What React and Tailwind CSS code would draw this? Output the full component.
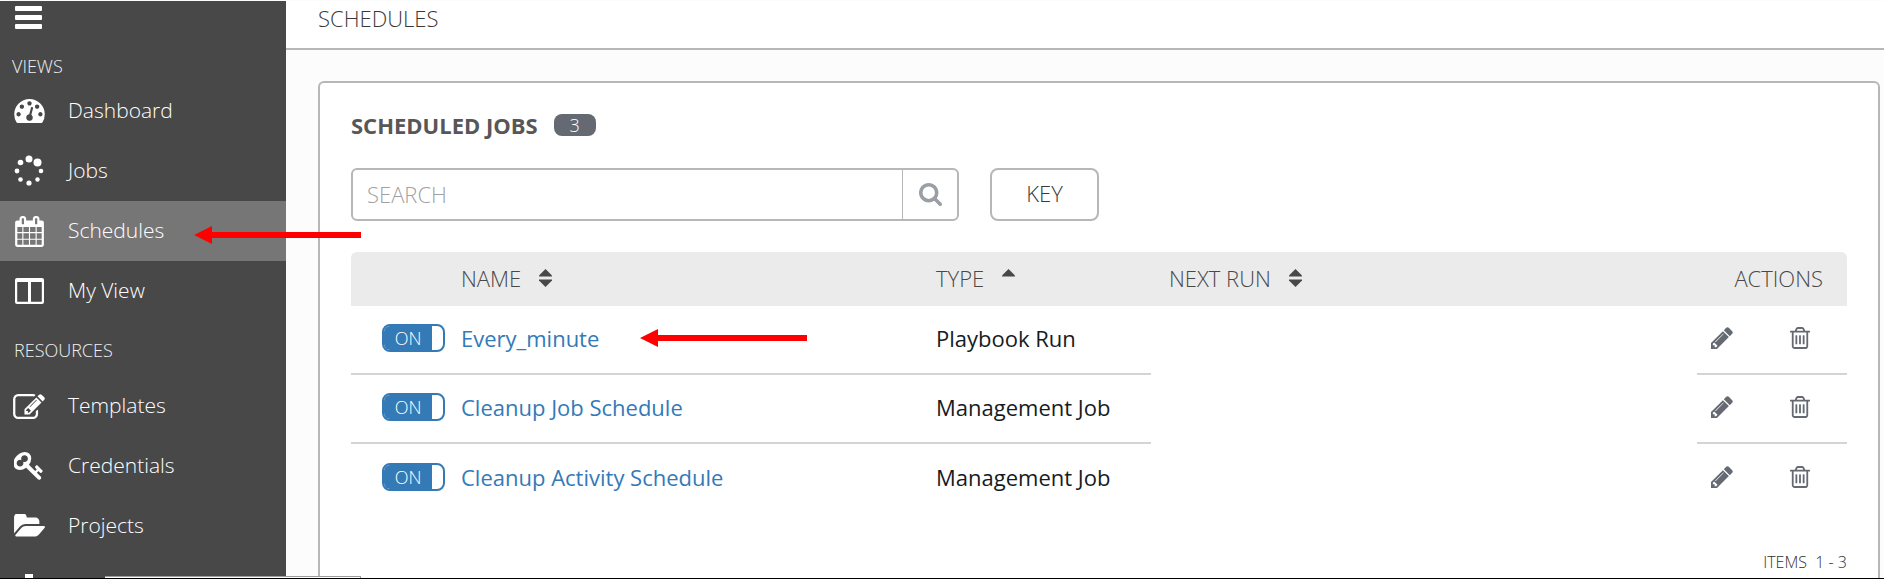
const TACH = "M384 1152q0-53-37.5-90.5t-90.5-37.5-90.5 37.5-37.5 90.5 37.5 90.5 90.5 37.5 90.5-37.5 37.5-90.5zm192-448q0-53-37.5-90.5t-90.5-37.5-90.5 37.5-37.5 90.5 37.5 90.5 90.5 37.5 90.5-37.5 37.5-90.5zm428 481l101-382q6-26-7.5-48.5t-38.5-29.5-48 6.5-30 39.5l-101 382q-60 5-107 43.5t-63 98.5q-20 77 20 146t117 89 146-20 89-117q16-60-6-117t-72-91zm660-33q0-53-37.5-90.5t-90.5-37.5-90.5 37.5-37.5 90.5 37.5 90.5 90.5 37.5 90.5-37.5 37.5-90.5zm-640-640q0-53-37.5-90.5t-90.5-37.5-90.5 37.5-37.5 90.5 37.5 90.5 90.5 37.5 90.5-37.5 37.5-90.5zm448 192q0-53-37.5-90.5t-90.5-37.5-90.5 37.5-37.5 90.5 37.5 90.5 90.5 37.5 90.5-37.5 37.5-90.5zm320 448q0 261-141 483-19 29-54 29h-1402q-35 0-54-29-141-221-141-483 0-182 71-348t191-286 286-191 348-71 348 71 286 191 191 286 71 348z";
const CALENDAR = "M192 1664h288v-288h-288v288zm352 0h320v-288h-320v288zm-352-352h288v-320h-288v320zm352 0h320v-320h-320v320zm-352-384h288v-288h-288v288zm736 736h320v-288h-320v288zm-384-736h320v-288h-320v288zm768 736h288v-288h-288v288zm-384-352h320v-320h-320v320zm-352-864v-288q0-13-9.5-22.5t-22.5-9.5h-64q-13 0-22.5 9.5t-9.5 22.5v288q0 13 9.5 22.5t22.5 9.5h64q13 0 22.5-9.5t9.5-22.5zm736 864h288v-320h-288v320zm-384-384h320v-288h-320v288zm384 0h288v-288h-288v288zm32-480v-288q0-13-9.5-22.5t-22.5-9.5h-64q-13 0-22.5 9.5t-9.5 22.5v288q0 13 9.5 22.5t22.5 9.5h64q13 0 22.5-9.5t9.5-22.5zm384-64v1280q0 52-38 90t-90 38h-1408q-52 0-90-38t-38-90v-1280q0-52 38-90t90-38h128v-96q0-66 47-113t113-47h64q66 0 113 47t47 113v96h384v-96q0-66 47-113t113-47h64q66 0 113 47t47 113v96h128q52 0 90 38t38 90z";
const EDIT = "M888 1184l116-116-152-152-116 116v56h96v96h56zm440-720q-16-16-33 1l-350 350q-17 17-1 33t33-1l350-350q17-17 1-33zm80 594v190q0 119-84.5 203.5t-203.5 84.5h-832q-119 0-203.5-84.5t-84.5-203.5v-832q0-119 84.5-203.5t203.5-84.5h832q63 0 117 25 15 7 18 23 3 17-9 29l-49 49q-14 14-32 8-23-6-45-6h-832q-66 0-113 47t-47 113v832q0 66 47 113t113 47h832q66 0 113-47t47-113v-126q0-13 9-22l64-64q15-15 35-7t20 29zm-96-738l288 288-672 672h-288v-288zm444 132l-92 92-288-288 92-92q28-28 68-28t68 28l152 152q28 28 28 68t-28 68z";
const KEY = "M832 512q0-80-56-136t-136-56-136 56-56 136q0 42 19 83-41-19-83-19-80 0-136 56t-56 136 56 136 136 56 136-56 56-136q0-42-19-83 41 19 83 19 80 0 136-56t56-136zm851 704q0 17-49 66t-66 49q-9 0-28.5-16t-36.5-33-38.5-40-24.5-26l-96 96 220 220q28 28 28 68 0 42-39 81t-81 39q-40 0-68-28l-671-671q-176 131-365 131-163 0-265.5-102.5t-102.5-265.5q0-160 95-313t248-248 313-95q163 0 265.5 102.5t102.5 265.5q0 189-131 365l355 355 96-96q-3-3-26-24.5t-40-38.5-33-36.5-16-28.5q0-17 49-66t66-49q13 0 23 10 6 6 46 44.5t82 79.5 86.5 86 73 78 28.5 41z";
const FOLDER = "M1943 952q0 31-31 66l-336 396q-43 51-120.5 86.5t-143.5 35.5h-1088q-34 0-60.5-13t-26.5-43q0-31 31-66l336-396q43-51 120.5-86.5t143.5-35.5h1088q34 0 60.5 13t26.5 43zm-343-344v160h-832q-94 0-197 47.5t-164 119.5l-337 396-5 6q0-4-.5-12.5t-.5-12.5v-960q0-92 66-158t158-66h320q92 0 158 66t66 158v32h544q92 0 158 66t66 158z";
const SEARCH = "M1216 832q0-185-131.5-316.5t-316.5-131.5-316.5 131.5-131.5 316.5 131.5 316.5 316.5 131.5 316.5-131.5 131.5-316.5zm512 832q0 52-38 90t-90 38q-54 0-90-38l-343-342q-179 124-399 124-143 0-273.5-55.5t-225-150-150-225-55.5-273.5 55.5-273.5 150-225 225-150 273.5-55.5 273.5 55.5 225 150 150 225 55.5 273.5q0 220-124 399l343 343q37 37 37 90z";
const PENCIL = "M491 1536l91-91-235-235-91 91v107h128v128h107zm523-928q0-22-22-22-10 0-17 7l-542 542q-7 7-7 17 0 22 22 22 10 0 17-7l542-542q7-7 7-17zm-54-192l416 416-832 832h-416v-416zm683 96q0 53-37 90l-166 166-416-416 166-165q36-38 90-38 53 0 91 38l235 234q37 39 37 91z";
const TRASH = "M704 736v576q0 14-9 23t-23 9h-64q-14 0-23-9t-9-23v-576q0-14 9-23t23-9h64q14 0 23 9t9 23zm256 0v576q0 14-9 23t-23 9h-64q-14 0-23-9t-9-23v-576q0-14 9-23t23-9h64q14 0 23 9t9 23zm256 0v576q0 14-9 23t-23 9h-64q-14 0-23-9t-9-23v-576q0-14 9-23t23-9h64q14 0 23 9t9 23zm128 724v-948h-896v948q0 22 7 40.5t14.5 27 10.5 8.5h832q3 0 10.5-8.5t14.5-27 7-40.5zm-672-1076h448l-48-117q-7-9-17-11h-317q-10 2-17 11zm928 32v64q0 14-9 23t-23 9h-96v948q0 83-47 143.5t-113 60.5h-832q-66 0-113-58.5t-47-141.5v-952h-96q-14 0-23-9t-9-23v-64q0-14 9-23t23-9h309l70-167q15-37 54-63t79-26h320q40 0 79 26t54 63l70 167h309q14 0 23 9t9 23z";

function Glyph({ d, box = "0 0 1792 1792", className }) {
  return (
    <svg viewBox={box} className={className} fill="currentColor" aria-hidden="true">
      <path d={d} />
    </svg>
  );
}

function Spinner() {
  return (
    <svg viewBox="0 0 32 32" className="size-8" fill="currentColor" aria-hidden="true">
      <circle cx="16" cy="4" r="3.500" />
      <circle cx="24.500" cy="7.500" r="4" />
      <circle cx="28" cy="16" r="2.300" />
      <circle cx="24.500" cy="24.500" r="2.200" />
      <circle cx="16" cy="28" r="2.600" />
      <circle cx="7.500" cy="24.500" r="2.300" />
      <circle cx="4" cy="16" r="2.400" />
      <circle cx="7.500" cy="7.500" r="2.800" />
    </svg>
  );
}

function Columns() {
  return (
    <svg viewBox="0 0 29 26" className="h-[26px] w-[29px]" fill="currentColor" aria-hidden="true">
      <path fillRule="evenodd" d="M2 0h25a2 2 0 0 1 2 2v22a2 2 0 0 1-2 2H2a2 2 0 0 1-2-2V2a2 2 0 0 1 2-2zM2.200 4v19.800h10.800V4zM16 4v19.800h10.800V4z" />
    </svg>
  );
}

const views = [
  { label: "Dashboard", icon: <Glyph d={TACH} box="0 256 1792 1408" className="h-6 w-[31px]" /> },
  { label: "Jobs", icon: <Spinner /> },
  { label: "Schedules", active: true, icon: <Glyph d={CALENDAR} box="64 0 1664 1792" className="h-[31px] w-[29px]" /> },
  { label: "My View", icon: <Columns /> },
];
const resources = [
  { label: "Templates", icon: <Glyph d={EDIT} box="0 128 1792 1408" className="h-[25px] w-8" /> },
  { label: "Credentials", icon: <Glyph d={KEY} box="64 128 1664 1600" className="h-7 w-[30px]" /> },
  { label: "Projects", icon: <Glyph d={FOLDER} box="0 256 1943 1280" className="h-6 w-8" /> },
  {
    name: "Inventories",
    icon: (
      <svg viewBox="0 0 30 26" className="h-[26px] w-[30px]" fill="currentColor" aria-hidden="true">
        <path d="M11 1h8v8h-2v5h10v6h3v6h-9v-6h3v-3H6v3h3v6H0v-6h3v-6h10V9h-2z" />
      </svg>
    ),
  },
];

function NavList({ items }) {
  return (
    <ul>
      {items.map((it) => (
        <li key={it.label || it.name}>
          <a
            href="#"
            aria-label={it.name}
            aria-current={it.active ? "page" : undefined}
            className={`flex h-15 items-center gap-[23px] pl-[13px] text-[21px] text-white ${it.active ? "bg-[#767676]" : ""}`}
          >
            <span className="flex w-8 shrink-0 items-center justify-center">{it.icon}</span>
            {it.label}
          </a>
        </li>
      ))}
    </ul>
  );
}

function Sort({ up }) {
  return (
    <svg viewBox="0 0 13 18" className="h-[18px] w-[13px]" fill="currentColor" aria-hidden="true">
      <path d="M6.500 0L13 6.500V7.500H0V6.500z" />
      {!up && <path d="M6.500 18L13 11.500V10.500H0V11.500z" />}
    </svg>
  );
}

function SortHead({ children, up, className }) {
  return (
    <th className={className} aria-sort={up ? "ascending" : "none"}>
      <button type="button" className="flex items-center gap-[18px]">
        {children}
        <Sort up={up} />
      </button>
    </th>
  );
}

function Arrow({ className }) {
  return (
    <svg viewBox="0 0 167 18" className={`absolute h-[18px] w-[167px] ${className}`} fill="#ff0000" aria-hidden="true">
      <path d="M0 9L18 0v6h149v6H18v6z" />
    </svg>
  );
}

const rows = [
  ["Every_minute", "Playbook Run"],
  ["Cleanup Job Schedule", "Management Job"],
  ["Cleanup Activity Schedule", "Management Job"],
];

export default function App() {
  return (
    <div className="flex h-screen overflow-hidden border-b border-black bg-[#fcfcfc] pt-px font-['Open_Sans',sans-serif] font-light text-[#161b1f]">
      <nav aria-label="Main" className="w-[286px] shrink-0 bg-[#484848] text-white">
        <button type="button" aria-label="Toggle menu" className="ml-[15px] mt-[5px] flex h-[23px] w-[27px] flex-col justify-between">
          <span className="h-[5px] w-full rounded-[1px] bg-white" />
          <span className="h-[5px] w-full rounded-[1px] bg-white" />
          <span className="h-[5px] w-full rounded-[1px] bg-white" />
        </button>
        <h2 className="mt-[25px] pl-3 text-lg leading-6 text-[#f0f0f0]">VIEWS</h2>
        <div className="mt-[3px]"><NavList items={views} /></div>
        <h2 className="mt-[17px] pl-3.5 text-lg leading-6 text-[#f0f0f0]">RESOURCES</h2>
        <div className="mt-3.5"><NavList items={resources} /></div>
      </nav>
      <div className="flex min-w-0 flex-1 flex-col">
        <header className="flex h-[49px] shrink-0 items-center border-b-2 border-[#b7b7b7] bg-white pb-3 pl-8">
          <h1 className="text-[22px] text-[#383838]">SCHEDULES</h1>
        </header>
        <main className="mt-[31px] ml-8 mr-1 flex-1 rounded-t-md border-2 border-b-0 border-[#b7b7b7] bg-white px-[31px]">
          <div className="flex items-center gap-4 pt-[26px]">
            <h2 className="text-[22px] leading-8 font-bold text-[#575757]">SCHEDULED JOBS</h2>
            <span className="flex h-[22px] w-[42px] items-center justify-center rounded-lg bg-[#646972] text-lg text-white">3</span>
          </div>
          <div className="mt-[27px] flex gap-[31px]">
            <form role="search" className="flex h-[53px] w-[608px] overflow-hidden rounded-md border-2 border-[#b7b7b7]">
              <input aria-label="Search" placeholder="SEARCH" className="min-w-0 flex-1 px-3.5 text-[22px] outline-none placeholder:text-[#a0a0a0]" />
              <button type="button" aria-label="Search" className="flex w-[55px] items-center justify-center border-l border-[#b7b7b7] text-[#9a9ea5]">
                <Glyph d={SEARCH} box="64 128 1664 1664" className="size-[23px]" />
              </button>
            </form>
            <button type="button" className="h-[53px] w-[109px] rounded-lg border-2 border-[#b7b7b7] pb-0.5 text-[22px] text-[#383838]">KEY</button>
          </div>
          <table className="mt-[31px] w-full table-fixed border-separate border-spacing-0 text-left text-[22px] leading-8">
            <thead className="text-[#484848]">
              <tr className="h-[54px] *:bg-[#ebebeb] *:p-0 *:pb-0.5 *:font-light">
                <th aria-label="Enabled" className="w-[110px] rounded-tl-md" />
                <SortHead className="w-[475px]">NAME</SortHead>
                <SortHead up className="w-[215px]">TYPE</SortHead>
                <SortHead><span className="pl-[18px]">NEXT RUN</span></SortHead>
                <th className="w-[150px] rounded-tr-md"><span className="flex justify-end pr-6">ACTIONS</span></th>
              </tr>
            </thead>
            <tbody className="font-normal">
              {rows.map(([name, type], i) => {
                const line = i < 2 ? "border-b-2 border-[#d4d4d4]" : "";
                return (
                  <tr key={name} className="h-[69px] *:p-0 *:pb-1">
                    <td className={line}>
                      <button type="button" role="switch" aria-checked="true" aria-label={`${name} enabled`} className="ml-[31px] flex h-7 w-[63px] overflow-hidden rounded-lg border-2 border-[#337ab7] bg-white text-lg leading-6 font-light text-white">
                        <span className="w-12 bg-[#337ab7] text-center">ON</span>
                      </button>
                    </td>
                    <td className={line}><a href="#" className="text-[#337ab7]">{name}</a></td>
                    <td className={line}>{type}</td>
                    <td />
                    <td className={line}>
                      <div className="flex items-center text-[#646972]">
                        <button type="button" aria-label={`Edit ${name}`} className="ml-3.5"><Glyph d={PENCIL} box="128 128 1536 1536" className="size-[22px]" /></button>
                        <button type="button" aria-label={`Delete ${name}`} className="ml-[57px]"><Glyph d={TRASH} box="192 128 1408 1536" className="h-[22px] w-5" /></button>
                      </div>
                    </td>
                  </tr>
                );
              })}
            </tbody>
          </table>
          <p className="mt-[37px] text-right text-base text-[#303030]">ITEMS&nbsp; 1 - 3</p>
        </main>
      </div>
      <Arrow className="left-[194px] top-[226px]" />
      <Arrow className="left-[640px] top-[329px]" />
      <div className="absolute bottom-px left-[105px] h-0.5 w-64 border-t border-r border-[#9a9a9a] bg-white" />
    </div>
  );
}
